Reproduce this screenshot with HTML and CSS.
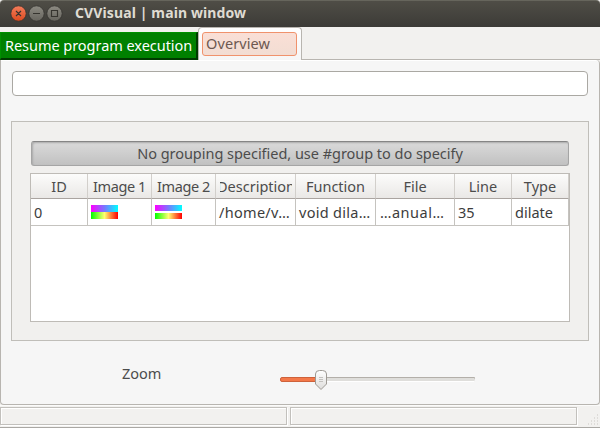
FILE: index.html
```html
<!DOCTYPE html>
<html lang="en">
<head>
<meta charset="utf-8">
<title>CVVisual | main window</title>
<link rel="stylesheet" href="styles.css">
</head>
<body>
<div class="window">
  <header class="titlebar">
    <svg class="controls" width="54" height="18" viewBox="0 0 54 18">
      <defs>
        <linearGradient id="close" x2="0" y2="1"><stop stop-color="#f37d5b"/><stop offset="1" stop-color="#dc4a1f"/></linearGradient>
        <linearGradient id="grey" x2="0" y2="1"><stop stop-color="#8c8a82"/><stop offset="1" stop-color="#66645d"/></linearGradient>
      </defs>
      <g stroke="#33322e" stroke-width=".8">
        <circle cx="8.500" cy="8.500" r="7.700" fill="url(#close)"/>
        <circle cx="26.500" cy="8.500" r="7.700" fill="url(#grey)"/>
        <circle cx="44.500" cy="8.500" r="7.700" fill="url(#grey)"/>
      </g>
      <path d="M6 6l5 5M11 6l-5 5M23 8.500h7M41.500 5.500h6v6h-6z" fill="none" stroke="#36342f" stroke-width="1.150"/>
    </svg>
    <h1 class="title">CVVisual | main window</h1>
  </header>
  <nav class="tabs">
    <button class="resume"><span>Resume program execution</span></button>
    <div class="tab"><div class="tab-label"><span>Overview</span></div></div>
    <div class="tab-rest"></div>
  </nav>
  <main class="pane">
    <input class="filter" type="text" aria-label="Filter">
    <section class="groups">
      <button class="group-button"><span>No grouping specified, use #group to do specify</span></button>
      <div class="table">
        <div class="row head">
          <div>ID</div><div class="image">Image 1</div><div class="image">Image 2</div><div class="clipped"><span>Description</span></div><div>Function</div><div>File</div><div>Line</div><div>Type</div>
        </div>
        <div class="row">
          <div>0</div>
          <div><span class="thumb"><i class="cool"></i><i class="warm"></i></span></div>
          <div><span class="thumb split"><i class="cool"></i><i class="warm"></i></span></div>
          <div class="path">/home/v…</div><div class="func">void dila…</div><div class="file">…anual…</div><div>35</div><div class="type">dilate</div>
        </div>
      </div>
    </section>
    <div class="zoom">
      <label class="zoom-label">Zoom</label>
      <svg class="slider" width="197" height="22" viewBox="0 0 197 22">
        <defs><linearGradient id="knob" x2="0" y2="1"><stop stop-color="#fff"/><stop offset="1" stop-color="#dddcda"/></linearGradient></defs>
        <path d="M40 12.500h154" stroke="#fff"/>
        <rect x="30" y="8" width="165" height="4" rx="1.500" fill="#dfdedb"/>
        <path d="M40 8.500h154.500v1" fill="none" stroke="#b3afa9"/>
        <rect x=".5" y="8.500" width="40" height="4" rx="1.500" fill="#f37849" stroke="#ce623b"/>
        <path d="M35.500 5q0-3.500 4-3.500h3q4 0 4 3.500v10l-5.500 5.500-5.500-5.500z" fill="url(#knob)" stroke="#9e9a94"/>
        <path d="M39 8.500h4M39 10.500h4M39 12.500h4" stroke="#c3c1be"/>
      </svg>
    </div>
  </main>
  <footer class="status">
    <div class="field first"></div>
    <div class="field second"></div>
    <svg class="grip" width="12" height="12" viewBox="0 0 12 12"><path d="M10 1h1M7 4h1M10 4h1M4 7h1M7 7h1M10 7h1M1 10h1M4 10h1M7 10h1M10 10h1" stroke="#c9c7c3" stroke-width="1.200"/></svg>
  </footer>
</div>
</body>
</html>
```
FILE: styles.css
```css
* { box-sizing: border-box; }
body {
  margin: 0;
  font: 14.5px/18px "Noto Sans", "Open Sans", sans-serif;
  color: #4c4c4c;
  background: #f2f1ef;
}
button { font: inherit; margin: 0; padding: 0; white-space: nowrap; }
.window { width: 600px; height: 428px; display: flex; flex-direction: column; overflow: hidden; border-bottom: 1px solid #aaa8a4; }
.titlebar {
  height: 27px;
  display: flex;
  align-items: flex-start;
  padding: 4px 0 0 10px;
  background: linear-gradient(#4f4d46, #3c3b37);
  border-top: 1px solid #66655c;
  border-radius: 4px 4px 0 0;
}
.controls { flex: none; }
.title { margin: -1px 0 0 11px; font-size: 14px; line-height: 18px; font-weight: 700; letter-spacing: .12px; color: #dfdbd2; white-space: nowrap; }
.tabs { height: 33px; display: flex; align-items: flex-end; }
.resume {
  width: 198px; height: 28px; margin-bottom: 0;
  background: #008000; color: #fff;
  border: 1px solid #009000;
  border-right: 2px solid #003a00;
  border-bottom: 2px solid #003a00;
  text-align: left; padding: 0 0 2px 4px;
  letter-spacing: -.04px;
}
.tab {
  width: 104px; height: 33px;
  border: 1px solid #b8b5b0; border-bottom: 0;
  border-radius: 4px 4px 0 0;
  background: linear-gradient(#fff, #f6f6f6);
  padding: 4px 3px;
}
.tab-label { width: 95px; height: 24px; border: 1px solid #f0926c; border-radius: 3px; background: linear-gradient(#fadfd6, #f2ddd3); color: #6d5851; padding: 1px 3px; letter-spacing: .1px; }
.tab-rest { flex: 1; height: 1px; background: #b8b5b0; }
.pane {
  height: 345px;
  background: #f6f6f6;
  border: 1px solid #b8b5b0;
  border-top: 0;
  border-radius: 0 4px 4px 4px;
  box-shadow: inset 0 1px #fff;
  padding: 11px 10px 0;
}
.filter { display: block; width: 576px; height: 25px; margin: 0 0 0 1px; border: 1px solid #aaa8a3; border-radius: 4px; background: #fff; }
.groups { width: 578px; height: 220px; margin-top: 25px; padding: 19px 18px 18px; border: 1px solid #c0beb9; background: #f1f0ee; }
.group-button {
  display: block; width: 538px; height: 25px; margin-left: 1px; padding-bottom: 2px;
  border: 1px solid #a5a5a5; border-top-color: #858585; border-radius: 3px;
  background: linear-gradient(#dadada, #c1c1c1);
  box-shadow: inset 1px 1px 2px #aaa;
  color: #4c4c4c;
  letter-spacing: -.03px;
}
.table { width: 540px; height: 149px; margin-top: 7px; border: 1px solid #bebbb6; background: #fff; }
.row { display: grid; grid-template-columns: 57px 64px 64px 80px 80px 79px 57px 57px; height: 27px; color: #3c3c3c; }
.row > div { border-right: 1px solid #c5c3bf; border-bottom: 1px solid #c5c3bf; padding: 4px 0 0 3px; white-space: nowrap; overflow: hidden; }
.row > .path, .row > .func { letter-spacing: .3px; }
.row > .file { padding-left: 4px; letter-spacing: .5px; }
.head { height: 25px; background: linear-gradient(#fcfcfb, #e9e7e5); color: #4c4c4c; }
.head > div { padding: 3px 0 0; text-align: center; border-right-color: #d2cfcb; border-bottom-color: #aaa4a0; }
.head > .image { letter-spacing: -.4px; }
.head > .clipped { padding-left: 4px; padding-right: 3px; }
.clipped span { display: flex; justify-content: center; overflow: hidden; }
.thumb { display: flex; flex-direction: column; width: 27px; height: 14px; margin-top: 2px; }
.thumb i { height: 7px; }
.split { justify-content: space-between; }
.split i { height: 6px; }
.cool { background: linear-gradient(90deg, #f0f, #7878ff 50%, #0ff); }
.warm { background: linear-gradient(90deg, #0f0, #ffff70 50%, #ff7a38 75%, #f00); }
.zoom { display: flex; padding-left: 111px; margin-top: 23px; }
.zoom-label { width: 158px; }
.slider { margin-top: 5px; }
.status { height: 22px; display: flex; padding-top: 1px; border-top: 1px solid #fbfbfa; }
.field { height: 18px; border: 1px solid #c2c0bc; box-shadow: inset 1px 1px #fff, 1px 1px #fff; }
.first { width: 287px; }
.second { width: 287px; margin-left: 3px; }
.grip { margin: 7px 0 0 10px; }
```
